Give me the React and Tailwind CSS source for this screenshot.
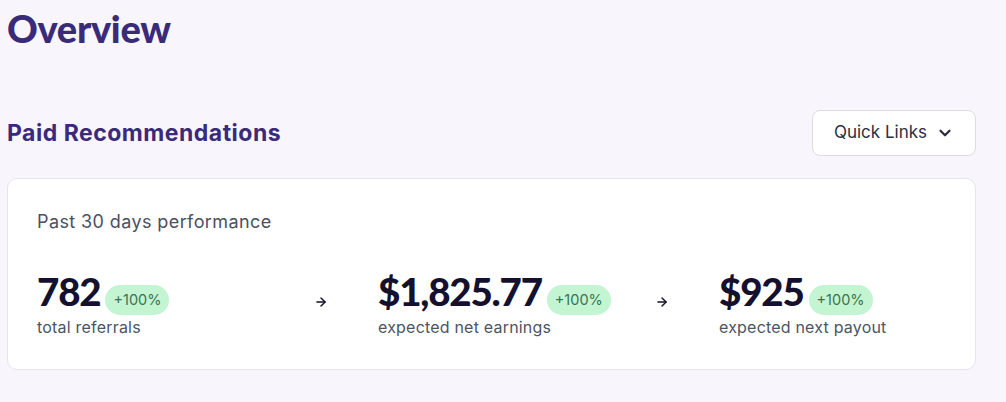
import React from 'react'
import { ArrowRight, ChevronDown } from 'lucide-react'

const stats = [
  { value: '782', label: 'total referrals', change: '+100%' },
  { value: '$1,825.77', label: 'expected net earnings', change: '+100%' },
  { value: '$925', label: 'expected next payout', change: '+100%' },
]

const Stat = ({ value, label, change }) => (
  <div>
    <div className="flex items-end gap-[5px]">
      <span className="font-['Lato'] text-[38.5px] font-black leading-none tracking-[-1.2px] text-[#14112e]">{value}</span>
      <span className="mb-[-4px] rounded-full bg-[#c3f5d3] px-[8px] py-[5px] text-[14.5px] leading-[20px] text-[#3b7350]">
        {change}
      </span>
    </div>
    <p className="mt-[6px] text-[16px] leading-[20px] tracking-[0.2px] text-[#4b5563]">{label}</p>
  </div>
)

export default function App() {
  return (
    <div
      className="min-h-[402px] bg-[#f8f5fd] pl-[7px] pr-[30px] pt-[6px]"
      style={{ fontFamily: 'Inter, "Noto Sans", sans-serif' }}
    >
      <h1 className="font-['Lato'] text-[38px] font-black leading-[44px] tracking-[-0.3px] text-[#3a2a7a]">Overview</h1>

      <div className="mt-[60px] flex items-center justify-between">
        <h2 className="text-[23px] font-bold leading-[30px] tracking-[0.5px] text-[#3a2a7a]">Paid Recommendations</h2>
        <button className="flex h-[46px] w-[164px] items-center justify-center gap-[9px] rounded-[8px] border border-[#dcdae3] bg-white text-[17px] text-[#2b2f3e]">
          Quick Links
          <ChevronDown size={18} strokeWidth={3} className="text-[#2b2f3e]" />
        </button>
      </div>

      <div className="mt-[22px] rounded-[10px] border border-[#e6e4ec] bg-white px-[29px] pb-[32px] pt-[29px]">
        <p className="text-[18px] leading-[28px] tracking-[0.4px] text-[#4b5060]">Past 30 days performance</p>
        <div className="mt-[36px] flex">
          {stats.map((s, i) => (
            <div
              key={s.label}
              className={i < stats.length - 1 ? 'flex w-[341px] shrink-0 items-center' : 'flex flex-1 items-center'}
            >
              <Stat {...s} />
              {i < stats.length - 1 && (
                <ArrowRight size={14} strokeWidth={2.5} className="ml-auto mr-[50px] mt-[-4px] text-[#14112e]" />
              )}
            </div>
          ))}
        </div>
      </div>
    </div>
  )
}
